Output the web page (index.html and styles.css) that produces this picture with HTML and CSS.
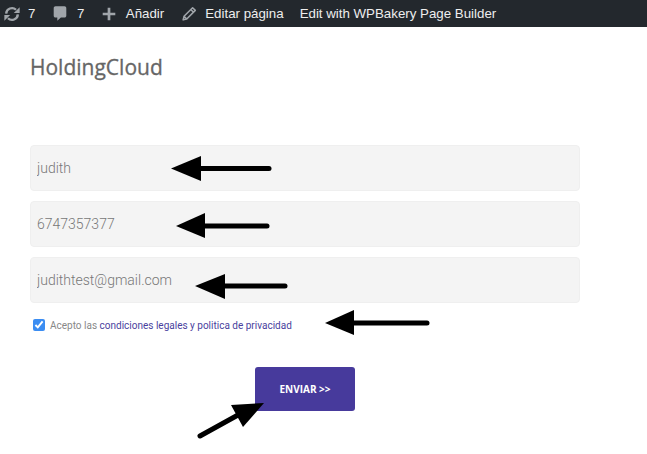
FILE: index.html
```html
<!DOCTYPE html>
<html lang="es">
<head>
    <meta charset="UTF-8">
    <meta name="viewport" content="width=device-width, initial-scale=1.0">
    <title>HoldingCloud</title>
    <link rel="stylesheet" href="styles.css">
</head>
<body>
    <div class="adminbar">
        <a class="bar-item item-updates">
            <svg class="bar-icon" viewBox="0 0 20 20">
                <path class="icon-line" d="M3.500 9.500a6.500 6.500 0 0 1 11-4.200M16.500 10.500a6.500 6.500 0 0 1-11 4.200"/>
                <path d="M18.500 2.500v6.500H12zM1.500 17.500V11H8z"/>
            </svg>
            <span>7</span>
        </a>
        <a class="bar-item item-comments">
            <svg class="bar-icon" viewBox="0 0 20 20"><path d="M5 1.500h10c1.100 0 2 .9 2 2v8.500c0 1.100-.9 2-2 2h-4l-4 3.500V14H5c-1.100 0-2-.9-2-2V3.500c0-1.100.9-2 2-2z"/></svg>
            <span>7</span>
        </a>
        <a class="bar-item item-new">
            <svg class="bar-icon" viewBox="0 0 20 20"><path d="M8.500 3h3v5.500H17v3h-5.500V17h-3v-5.500H3v-3h5.500z"/></svg>
            <span>Añadir</span>
        </a>
        <a class="bar-item item-edit">
            <svg class="bar-icon" viewBox="0 0 20 20">
                <path class="icon-outline" d="M14 3l3 3L7.500 15.500 3.500 16.500l1-4zM12 5l3 3M4.500 12.500l3 3"/>
            </svg>
            <span>Editar página</span>
        </a>
        <a class="bar-item item-builder"><span>Edit with WPBakery Page Builder</span></a>
    </div>

    <div class="content">
        <div class="site-title">HoldingCloud</div>
        <form class="contact-form">
            <input class="field" type="text" value="judith">
            <input class="field" type="text" value="6747357377">
            <input class="field" type="text" value="judithtest@gmail.com">
            <label class="legal">
                <input type="checkbox" checked>
                <span>Acepto las <a class="legal-link">condiciones legales y politica de privacidad</a></span>
            </label>
            <div class="submit-row">
                <button class="submit-btn" type="button">ENVIAR &gt;&gt;</button>
            </div>
        </form>
    </div>

    <!-- flechas dibujadas encima de la captura -->
    <svg class="annotations" viewBox="0 0 647 454">
        <g class="arrow-line">
            <line x1="201" y1="168.500" x2="269" y2="168.500"/>
            <line x1="205" y1="226" x2="267" y2="226"/>
            <line x1="225" y1="286" x2="285" y2="286"/>
            <line x1="354" y1="323" x2="427" y2="323"/>
            <line x1="238" y1="415" x2="200" y2="436"/>
        </g>
        <polygon points="171,168.500 201,156 201,181"/>
        <polygon points="176,226 205,213 205,238"/>
        <polygon points="195,286 225,274 225,299"/>
        <polygon points="325,323 354,310 354,335"/>
        <polygon points="264,403 231,405 243,427"/>
    </svg>
</body>
</html>
```

FILE: styles.css
```css
* {
    margin: 0;
    padding: 0;
    box-sizing: border-box;
}
html, body {
    height: 454px;
    overflow: hidden;
}
body {
    position: relative;
    background-color: white;
    font-family: "Liberation Sans", Arial, sans-serif;
}
.adminbar {
    display: flex;
    align-items: center;
    height: 27px;
    background-color: #23282d;
    color: #eee;
    font-size: 13.300px;
}
.bar-item {
    display: flex;
    align-items: center;
    gap: 7.500px;
}
.bar-icon {
    width: 18px;
    height: 18px;
    fill: #a0a5aa;
}
.icon-line {
    fill: none;
    stroke: #a0a5aa;
    stroke-width: 2.600;
}
.icon-outline {
    fill: none;
    stroke: #a0a5aa;
    stroke-width: 1.700;
    stroke-linejoin: round;
}
.item-updates {
    gap: 7px;
    margin-left: 3px;
}
.item-comments {
    margin-left: 16px;
}
.item-new {
    margin-left: 16px;
}
.item-edit {
    margin-left: 15.500px;
}
.item-builder {
    margin-left: 16px;
}
.content {
    padding: 0 30px;
}
.site-title {
    margin-top: 25px;
    height: 30px;
    line-height: 30px;
    font-family: "Open Sans", sans-serif;
    font-size: 21px;
    font-weight: 400;
    color: #666;
    -webkit-text-stroke: 0.300px #666;
}
.contact-form {
    display: flex;
    flex-direction: column;
    gap: 10px;
    width: 550px;
    margin-top: 63px;
}
.field {
    height: 46px;
    padding: 0 6px;
    background-color: #f4f4f4;
    border: 1px solid #efefef;
    border-radius: 4px;
    font-family: Roboto, sans-serif;
    font-size: 14px;
    font-weight: 300;
    color: #777;
}
.legal {
    display: flex;
    align-items: center;
    gap: 5px;
    margin-top: 6px;
    padding-left: 3px;
    font-family: Roboto, sans-serif;
    font-size: 10px;
    color: #888;
}
.legal input {
    width: 12px;
    height: 12px;
    accent-color: #3b8df2;
}
.legal-link {
    color: #4a3f9e;
}
.submit-row {
    display: flex;
    justify-content: center;
    margin-top: 26px;
}
.submit-btn {
    width: 100px;
    height: 44px;
    background-color: #473a9c;
    color: white;
    border: none;
    border-radius: 3px;
    font-family: "Open Sans", sans-serif;
    font-size: 10px;
    font-weight: 700;
}
.annotations {
    position: absolute;
    top: 0;
    left: 0;
    width: 647px;
    height: 454px;
    fill: black;
}
.arrow-line {
    stroke: black;
    stroke-width: 5;
    stroke-linecap: round;
}
```
